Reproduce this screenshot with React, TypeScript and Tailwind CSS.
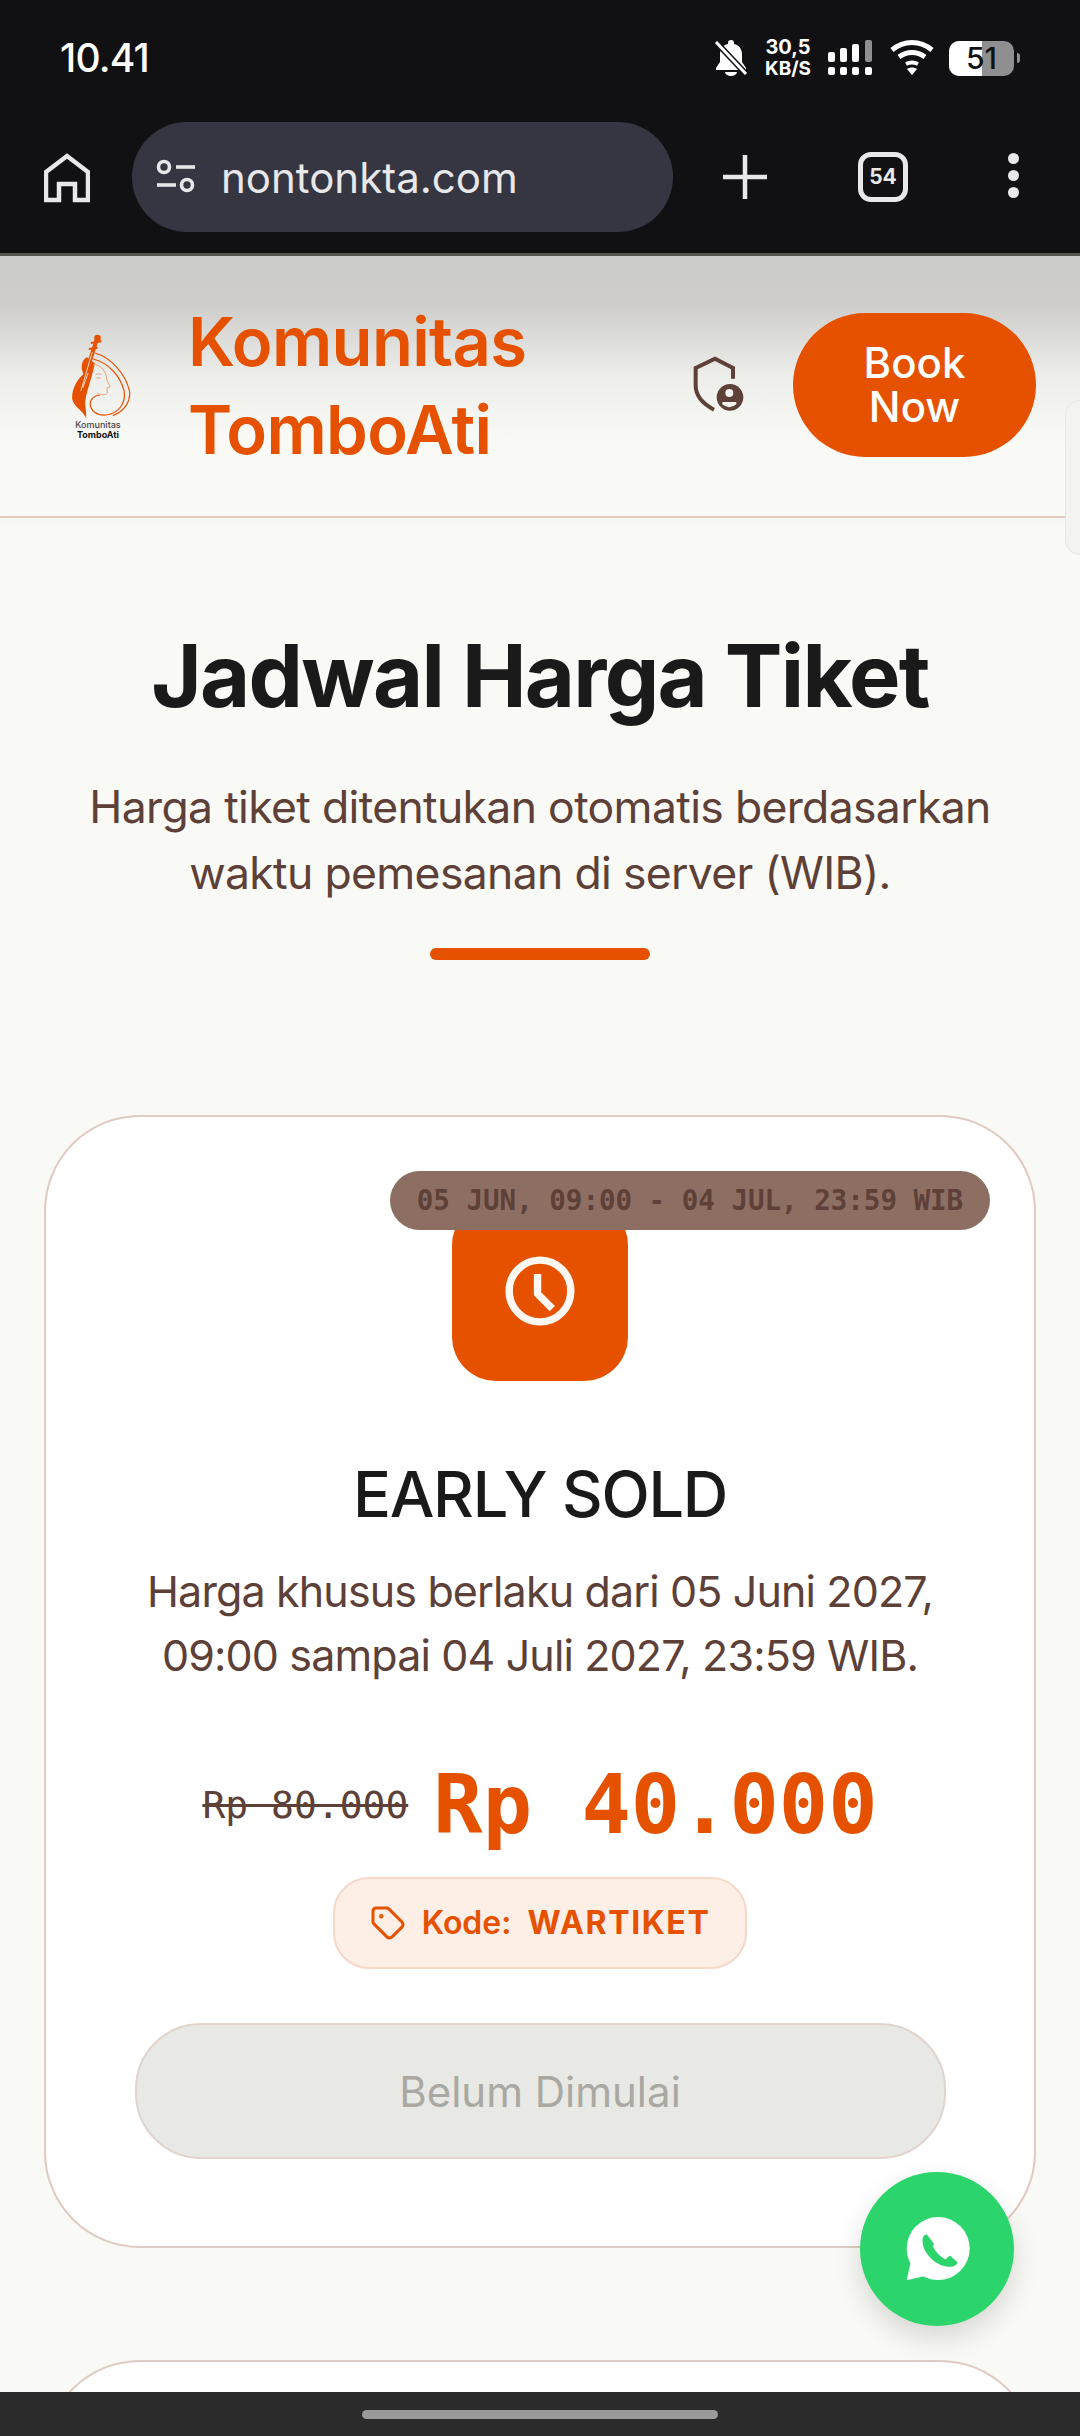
import { Tag } from "lucide-react";

const SANS = "font-['Inter','Noto_Sans',sans-serif]";
const MONO = "font-['DejaVu_Sans_Mono','Liberation_Mono',monospace]";

function StatusIcons() {
  return (
    <div className="flex items-center text-white">
      <svg width="34" height="38" viewBox="0 0 34 38" fill="white">
        <path d="M17 1a3 3 0 0 1 3 3v1c5 1 8 5 8 10v8l4 6v2H2v-2l4-6v-8c0-5 3-9 8-10V4a3 3 0 0 1 3-3z" />
        <path d="M11 33h12a6 4 0 0 1-12 0z" />
        <path d="M2 3l30 32" stroke="#111113" strokeWidth="6" />
        <path d="M2 3l30 32" stroke="white" strokeWidth="3" />
      </svg>
      <div className={`${SANS} ml-[15px] text-[20px] leading-[21px] font-bold text-center w-[50px]`}>
        <div>30,5</div>
        <div className="text-[19px]">KB/S</div>
      </div>
      <svg width="46" height="36" viewBox="0 0 46 36" fill="white" className="ml-[14px]">
        <rect x="1" y="12" width="7" height="10" rx="2" />
        <rect x="13" y="8" width="7" height="14" rx="2" />
        <rect x="25" y="4" width="7" height="18" rx="2" />
        <rect x="38" y="0" width="7" height="22" rx="2" fill="#8f8f8f" />
        <rect x="1" y="27" width="7" height="8" rx="2" />
        <rect x="13" y="27" width="7" height="8" rx="2" />
        <rect x="25" y="27" width="7" height="8" rx="2" />
        <rect x="38" y="27" width="7" height="8" rx="2" />
      </svg>
      <svg width="44" height="36" viewBox="0 0 44 36" fill="none" stroke="white" strokeWidth="5" className="ml-[17px]">
        <path d="M2 10c12-10 28-10 40 0" />
        <path d="M9 17c8-6 18-6 26 0" />
        <path d="M16 24c4-2 8-2 12 0" strokeWidth="4" />
        <path d="M22 35l-5-6c3-2 7-2 10 0z" fill="white" stroke="none" />
      </svg>
      <div className="ml-[15px] flex items-center gap-[3px]">
        <div className="relative w-[65px] h-[35px] rounded-[10px] overflow-hidden bg-[#8f8f8f]">
          <div className="w-[33px] h-full bg-white" />
          <div className={`${SANS} absolute inset-0 flex items-center justify-center text-[#111] text-[30px] leading-[35px] font-medium`}>51</div>
        </div>
        <div className="w-[3px] h-[10px] rounded-r-sm bg-[#8f8f8f]" />
      </div>
    </div>
  );
}

function BrowserBar() {
  return (
    <div className="h-[160px] flex items-start pl-[44px] pt-[29px]">
      <svg width="46" height="50" viewBox="0 0 46 50" fill="none" stroke="#e8e8ea" strokeWidth="4.5" className="mt-[31px]">
        <path d="M2 47V19L23 3l21 16v28H31V31H15v16z" />
      </svg>
      <div className="ml-[42px] w-[541px] h-[110px] rounded-full bg-[#353641] flex items-center pl-[23px]">
        <svg width="42" height="36" viewBox="0 0 42 36" fill="none" stroke="#e8e8ea" strokeWidth="3.6">
          <circle cx="9" cy="8" r="5.5" />
          <path d="M21 8h19" />
          <circle cx="32" cy="26" r="5.5" />
          <path d="M2 26h19" />
        </svg>
        <span className={`${SANS} text-[#e8e8ea] text-[42px] ml-[24px]`}>nontonkta.com</span>
      </div>
      <svg width="44" height="46" viewBox="0 0 44 46" stroke="#e8e8ea" strokeWidth="4.5" className="mt-[32px] ml-[50px]">
        <path d="M22 1v44M0 23h44" />
      </svg>
      <div className="mt-[30px] ml-[91px] w-[50px] h-[50px] rounded-[13px] border-[5px] border-[#e8e8ea] flex items-center justify-center">
        <span className={`${SANS} text-[#e8e8ea] text-[21px] font-bold`}>54</span>
      </div>
      <div className="mt-[31px] ml-[100px] flex flex-col gap-[6px]">
        <div className="w-[11px] h-[11px] rounded-full bg-[#e8e8ea]" />
        <div className="w-[11px] h-[11px] rounded-full bg-[#e8e8ea]" />
        <div className="w-[11px] h-[11px] rounded-full bg-[#e8e8ea]" />
      </div>
    </div>
  );
}

function Logo() {
  return (
    <div className="w-[64px] flex flex-col items-center">
      <svg width="62" height="85" viewBox="115 70 185 255" fill="none" className="ml-[3px]">
        <circle cx="200" cy="85" r="10" fill="#e65100" />
        <path d="M180 100l32-5M174 118l26-4" stroke="#e65100" strokeWidth="6" />
        <path d="M197 92l-42 130" stroke="#e65100" strokeWidth="12" />
        <path d="M168 143c-16 8-20 32-10 50-16 14-36 42-34 74 4 24 28 30 42 58 2-26-8-40 2-74 6-24 18-58 24-90z" fill="#e65100" />
        <path d="M184 128l-34 116M172 190l-16 44" stroke="#fff4ea" strokeWidth="2.5" />
        <path d="M192 130c48 13 92 62 104 114 4 30-14 60-50 74" stroke="#e65100" strokeWidth="3.5" />
        <path d="M186 148c50 12 82 52 94 96 5 36-14 66-54 72-30 3-46-14-48-32 0-16 14-28 30-28" stroke="#e65100" strokeWidth="3.5" />
        <path d="M188 165c26 0 38 24 40 46l10 20-10 5 2 14c-6 8-20 6-32 0" stroke="#e8a27a" strokeWidth="3" />
        <path d="M194 195c6-3 12-3 18 0M196 205h14" stroke="#cf9b7c" strokeWidth="2.5" />
      </svg>
      <span className={`${SANS} text-[#444] text-[9px] leading-[10px] font-medium mt-[2px]`}>Komunitas</span>
      <span className={`${SANS} text-[#111] text-[9px] leading-[9px] font-bold`}>TomboAti</span>
    </div>
  );
}

function ShieldIcon() {
  return (
    <svg width="80" height="80" viewBox="0 0 240 240" fill="none" className="ml-[92px] -mt-[4px]">
      <path d="M159 104V72L105 44 47 72v52c0 30 22 56 55 73" stroke="#5d4037" strokeWidth="12" />
      <circle cx="150" cy="160" r="40" fill="#5d4037" />
      <circle cx="148" cy="147" r="12" fill="#f2f2ef" />
      <path d="M127 174h42v7a30 30 0 0 1-42 0z" fill="#f2f2ef" />
    </svg>
  );
}

function WhatsappIcon() {
  return (
    <svg width="73" height="73" viewBox="600 340 220 220">
      <circle cx="712" cy="447" r="95" fill="white" />
      <path d="M630 485l-13 58 56-13z" fill="white" />
      <path
        d="M678 405c-10 0-14 10-13 23 3 37 47 77 85 74 10-1 18-5 21-13l-24-21-13 12c-16-8-30-22-37-38l2-10z"
        fill="#2bd56b"
      />
    </svg>
  );
}

function Header() {
  return (
    <header className="h-[262px] border-b-2 border-[#e0cac2] bg-[linear-gradient(180deg,#cbcbc8_0%,#cecdca_18%,#dcdcda_32%,#eeeeeb_47%,#f9f9f6_72%)] shadow-[0_6px_12px_rgba(0,0,0,0.015)] flex items-center pl-[66px] pr-[44px]">
      <Logo />
      <h1 className={`${SANS} ml-[58px] w-[400px] text-[#e65100] text-[67px] leading-[88px] font-semibold tracking-[-0.01em]`}>
        Komunitas TomboAti
      </h1>
      <ShieldIcon />
      <button className={`${SANS} ml-auto w-[243px] h-[144px] -mt-[3px] rounded-full bg-[#e65100] text-white text-[42px] leading-[44px] font-medium`}>
        Book
        <br />
        Now
      </button>
    </header>
  );
}

function PriceCard() {
  return (
    <section className="relative mx-[44px] h-[1133px] rounded-[96px] border-2 border-[#e0cac2] bg-white flex flex-col items-center pt-[84px]">
      <div className={`${MONO} absolute top-[54px] right-[44px] h-[59px] w-[600px] rounded-full bg-[#8d6e63] text-[#5d4037] text-[27.5px] font-bold flex items-center justify-center z-10`}>
        05 JUN, 09:00 - 04 JUL, 23:59 WIB
      </div>
      <div className="w-[176px] h-[180px] rounded-[44px] bg-[#e65100] flex items-center justify-center">
        <svg width="74" height="74" viewBox="0 0 24 24" fill="none" stroke="#fff8f2" strokeWidth="2.4">
          <circle cx="12" cy="12" r="10" />
          <path d="M11.2 6.5v6.4l4.8 4.8" />
        </svg>
      </div>
      <h3 className={`${SANS} mt-[71px] text-[#1a1a1a] text-[63px] leading-[84px] font-medium tracking-[-0.02em]`}>EARLY SOLD</h3>
      <p className={`${SANS} mt-[23px] text-[#5d4037] text-[43px] leading-[64px] text-center tracking-[-0.02em]`}>
        Harga khusus berlaku dari 05 Juni 2027,
        <br />
        09:00 sampai 04 Juli 2027, 23:59 WIB.
      </p>
      <div className="mt-[70px] h-[96px] flex items-center gap-[25px]">
        <span className={`${MONO} text-[#5d4037] text-[38px] line-through`}>Rp 80.000</span>
        <span className={`${MONO} text-[#e65100] text-[82px] leading-[96px] font-bold`}>Rp 40.000</span>
      </div>
      <div className={`${SANS} mt-[24px] h-[92px] w-[414px] rounded-[36px] border-2 border-[#f5d8c8] bg-[#fdeee6] flex items-center justify-center text-[#e65100] text-[32px] font-semibold`}>
        <Tag size={36} strokeWidth={2} className="mr-[16px]" />
        Kode:&nbsp;&nbsp;<span className="font-bold tracking-[0.05em]">WARTIKET</span>
      </div>
      <button className={`${SANS} mt-[54px] w-[811px] h-[136px] rounded-[66px] border-2 border-[#e0d4cd] bg-[#e8e8e4] text-[#a9a8a3] text-[42px]`}>
        Belum Dimulai
      </button>
    </section>
  );
}

export default function App() {
  return (
    <div className={`${SANS} relative w-[1080px] h-[2436px] overflow-hidden flex flex-col bg-[#f9f9f6]`}>
      <div className="shrink-0 bg-[#111113]">
        <div className="h-[93px] flex items-center justify-between pl-[60px] pr-[60px] pt-[23px]">
          <span className="text-white text-[39px] font-medium tracking-[-0.02em]">10.41</span>
          <StatusIcons />
        </div>
        <BrowserBar />
        <div className="h-[3px] bg-[#55554f]" />
      </div>

      <main className="flex-1 overflow-hidden">
        <Header />
        <div className="pt-[100px] pb-[155px] flex flex-col items-center">
          <h2 className="text-[#1a1a1a] text-[86.5px] leading-[116px] font-bold tracking-[-0.02em]">Jadwal Harga Tiket</h2>
          <p className="mt-[40px] text-[#5d4037] text-[44.5px] leading-[66px] text-center tracking-[-0.015em]">
            Harga tiket ditentukan otomatis berdasarkan
            <br />
            waktu pemesanan di server (WIB).
          </p>
          <div className="mt-[42px] w-[220px] h-[12px] rounded-full bg-[#e65100]" />
        </div>
        <PriceCard />
        <div className="mx-[44px] mt-[112px] h-[200px] rounded-[96px] border-2 border-[#e0cac2] bg-white" />
      </main>

      <div className="shrink-0 h-[44px] bg-[#2b2b2b] flex items-center justify-center">
        <div className="w-[356px] h-[9px] rounded-full bg-[#9a9a9a]" />
      </div>

      <div className="absolute top-[400px] right-0 w-[15px] h-[155px] rounded-l-[16px] border border-r-0 border-[#e7e7e3] bg-[#f3f3f0]" />
      <a className="absolute left-[860px] top-[2172px] w-[154px] h-[154px] rounded-full bg-[#2bd56b] shadow-[0_12px_28px_rgba(0,0,0,0.14)] flex items-center justify-center">
        <WhatsappIcon />
      </a>
    </div>
  );
}
